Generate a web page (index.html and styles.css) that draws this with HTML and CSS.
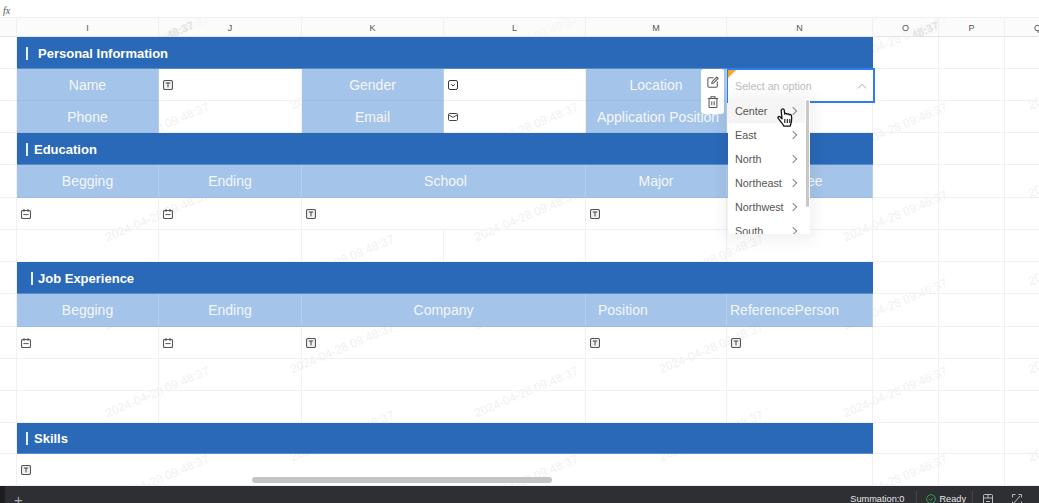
FILE: index.html
```html
<!DOCTYPE html>
<html lang="en">
<head>
<meta charset="utf-8">
<title>Resume sheet</title>
<link rel="stylesheet" href="styles.css">
</head>
<body>
<svg class="defs" width="0" height="0" aria-hidden="true">
  <symbol id="i-text" viewBox="0 0 10 10"><rect x=".5" y=".5" width="9" height="9" rx="1.6" fill="#f0f0f0" stroke="#555" stroke-width="1.100"/><path d="M2.800 3h4.400M5 3v4.400" fill="none" stroke="#444" stroke-width="1"/></symbol>
  <symbol id="i-date" viewBox="0 0 10 10"><rect x=".5" y="1.500" width="9" height="8" rx="1.400" fill="none" stroke="#555" stroke-width="1.100"/><path d="M3 0v3M7 0v3M2.400 5.600h5.200" fill="none" stroke="#555"/></symbol>
  <symbol id="i-select" viewBox="0 0 10 10"><rect x=".5" y=".5" width="9" height="9" rx="1.600" fill="none" stroke="#333"/><path d="M3.200 4.200 5 6l1.800-1.800" fill="none" stroke="#333"/></symbol>
  <symbol id="i-mail" viewBox="0 0 10 10"><rect x=".5" y="1.500" width="9" height="7" rx="1.200" fill="none" stroke="#444"/><path d="M1 3l4 2.400L9 3" fill="none" stroke="#444"/></symbol>
</svg>

<header class="formula"><i class="fx">fx</i></header>

<main class="sheet">
  <div class="marks">
    <div class="mark-col"><span>2024-04-28 09:48:37</span><span>2024-04-28 09:48:37</span><span>2024-04-28 09:48:37</span><span>2024-04-28 09:48:37</span><span>2024-04-28 09:48:37</span><span>2024-04-28 09:48:37</span></div>
    <div class="mark-col low"><span>2024-04-28 09:48:37</span><span>2024-04-28 09:48:37</span><span>2024-04-28 09:48:37</span><span>2024-04-28 09:48:37</span><span>2024-04-28 09:48:37</span><span>2024-04-28 09:48:37</span></div>
    <div class="mark-col"><span>2024-04-28 09:48:37</span><span>2024-04-28 09:48:37</span><span>2024-04-28 09:48:37</span><span>2024-04-28 09:48:37</span><span>2024-04-28 09:48:37</span><span>2024-04-28 09:48:37</span></div>
    <div class="mark-col low"><span>2024-04-28 09:48:37</span><span>2024-04-28 09:48:37</span><span>2024-04-28 09:48:37</span><span>2024-04-28 09:48:37</span><span>2024-04-28 09:48:37</span><span>2024-04-28 09:48:37</span></div>
    <div class="mark-col"><span>2024-04-28 09:46:37</span><span>2024-04-28 09:46:37</span><span>2024-04-28 09:46:37</span><span>2024-04-28 09:46:37</span><span>2024-04-28 09:46:37</span><span>2024-04-28 09:46:37</span></div>
    <div class="mark-col low"><span>2024-04-28 09:48:37</span><span>2024-04-28 09:48:37</span><span>2024-04-28 09:48:37</span><span>2024-04-28 09:48:37</span><span>2024-04-28 09:48:37</span><span>2024-04-28 09:48:37</span></div>
  </div>

  <div class="grid">
    <!-- column letters -->
    <div class="ch"></div><div class="ch">I</div><div class="ch">J<span class="hmark j">48:37</span></div><div class="ch">K</div><div class="ch">L</div><div class="ch">M</div><div class="ch">N</div><div class="ch">O<span class="hmark o">48:37</span></div><div class="ch">P</div><div class="ch">Q</div>

    <!-- Personal Information -->
    <div class="c"></div><div class="title s6"><b class="tick"></b><span class="gap-l">Personal Information</span></div><div class="c"></div><div class="c"></div><div class="c"></div>

    <div class="c"></div><div class="lbl">Name</div><div class="w"><svg class="ic"><use href="#i-text"/></svg></div><div class="lbl">Gender</div><div class="w"><svg class="ic"><use href="#i-select"/></svg></div><div class="lbl">Location</div>
    <div class="w anchor">
      <div class="tools">
        <svg width="12" height="12" viewBox="0 0 14 14" fill="none" stroke="#555" stroke-width="1.200"><path d="M7.500 2H2.200A1.200 1.200 0 0 0 1 3.200v8.600A1.200 1.200 0 0 0 2.200 13h8.600a1.200 1.200 0 0 0 1.200-1.200V6.500"/><path d="M5.600 8.600 6 6.600 11.400 1.200l1.600 1.600L7.600 8.200z"/></svg>
        <svg width="12" height="12" viewBox="0 0 14 14" fill="none" stroke="#555" stroke-width="1.200"><path d="M1 3h12M4.600 3V1h4.800v2M2.400 3v9.400a1 1 0 0 0 1 1h7.200a1 1 0 0 0 1-1V3M5.600 6v4.800M8.400 6v4.800"/></svg>
      </div>
      <div class="editor">
        <span class="flag"></span>
        <span class="ph">Select an option</span>
        <svg class="up" width="10" height="6" viewBox="0 0 10 6" fill="none" stroke="#aaa"><path d="M1 5.400 5 1.200l4 4.200"/></svg>
      </div>
      <div class="menu">
        <div class="opt on">Center<i class="gt"></i></div>
        <div class="opt">East<i class="gt"></i></div>
        <div class="opt">North<i class="gt"></i></div>
        <div class="opt">Northeast<i class="gt"></i></div>
        <div class="opt">Northwest<i class="gt"></i></div>
        <div class="opt">South<i class="gt"></i></div>
        <span class="thumb"></span>
      </div>
      <svg class="hand" width="17" height="20" viewBox="0 0 17 20"><path d="M5 1.200c.9-.7 2-.2 2.200.9l.6 4.100c.2-1 2-1 2.300.2.300-.9 1.900-.8 2.200.4.500-.6 1.900-.4 2.100.8.400 2.400.4 4.600-.3 7.200-.3 1.200-.6 2.200-.9 3.400H6.900c-.7-1.700-2-3-3.200-4.600L1.200 10.300c-.8-1.300.7-2.400 1.800-1.500l2 1.900L4.200 2.700c-.1-.6.300-1.200.8-1.500z" fill="#fff" stroke="#111" stroke-width="1.300" stroke-linejoin="round"/><path d="M7.800 11v4M10.300 11v4M12.800 11v4" stroke="#111" stroke-width="1.100"/></svg>
    </div>
    <div class="c"></div><div class="c"></div><div class="c"></div>

    <div class="c"></div><div class="lbl">Phone</div><div class="w"></div><div class="lbl">Email</div><div class="w"><svg class="ic"><use href="#i-mail"/></svg></div><div class="lbl nudge">Application Position</div><div class="w"></div><div class="c"></div><div class="c"></div><div class="c"></div>

    <!-- Education -->
    <div class="c"></div><div class="title s6"><b class="tick"></b><span>Education</span></div><div class="c"></div><div class="c"></div><div class="c"></div>

    <div class="c"></div><div class="lbl">Begging</div><div class="lbl">Ending</div><div class="lbl s2 nudge">School</div><div class="lbl">Major</div><div class="lbl">Degree</div><div class="c"></div><div class="c"></div><div class="c"></div>

    <div class="c"></div><div class="w"><svg class="ic"><use href="#i-date"/></svg></div><div class="w"><svg class="ic"><use href="#i-date"/></svg></div><div class="w s2"><svg class="ic"><use href="#i-text"/></svg></div><div class="w"><svg class="ic"><use href="#i-text"/></svg></div><div class="w"></div><div class="c"></div><div class="c"></div><div class="c"></div>

    <div class="c"></div><div class="w"></div><div class="w"></div><div class="w"></div><div class="w"></div><div class="w"></div><div class="w"></div><div class="c"></div><div class="c"></div><div class="c"></div>

    <!-- Job Experience -->
    <div class="c"></div><div class="title s6 indent"><b class="tick"></b><span>Job Experience</span></div><div class="c"></div><div class="c"></div><div class="c"></div>

    <div class="c"></div><div class="lbl">Begging</div><div class="lbl">Ending</div><div class="lbl s2">Company</div><div class="lbl start-a">Position</div><div class="lbl start-b">ReferencePerson</div><div class="c"></div><div class="c"></div><div class="c"></div>

    <div class="c"></div><div class="w"><svg class="ic"><use href="#i-date"/></svg></div><div class="w"><svg class="ic"><use href="#i-date"/></svg></div><div class="w s2"><svg class="ic"><use href="#i-text"/></svg></div><div class="w"><svg class="ic"><use href="#i-text"/></svg></div><div class="w"><svg class="ic"><use href="#i-text"/></svg></div><div class="c"></div><div class="c"></div><div class="c"></div>

    <div class="c"></div><div class="w"></div><div class="w"></div><div class="w s2"></div><div class="w"></div><div class="w"></div><div class="c"></div><div class="c"></div><div class="c"></div>
    <div class="c"></div><div class="w"></div><div class="w"></div><div class="w s2"></div><div class="w"></div><div class="w"></div><div class="c"></div><div class="c"></div><div class="c"></div>

    <!-- Skills -->
    <div class="c"></div><div class="title s6"><b class="tick"></b><span>Skills</span></div><div class="c"></div><div class="c"></div><div class="c"></div>

    <div class="c"></div><div class="w s6"><svg class="ic"><use href="#i-text"/></svg></div><div class="c"></div><div class="c"></div><div class="c"></div>
  </div>

  <div class="hscroll"></div>
</main>

<footer class="status">
  <div class="edge"></div>
  <span class="plus">+</span>
  <span class="sum">Summation:0</span>
  <i class="rule"></i>
  <svg class="ok" width="10" height="10" viewBox="0 0 11 11" fill="none" stroke="#2fa84f"><circle cx="5.500" cy="5.500" r="4.800"/><path d="M3.200 5.600l1.600 1.600 3-3"/></svg>
  <span class="ready">Ready</span>
  <i class="rule"></i>
  <svg class="ft a" width="10" height="11" viewBox="0 0 10 11" fill="none" stroke="#bbb"><rect x=".5" y=".5" width="9" height="10" rx="1"/><path d="M.5 4h9M5 .5V4M3 7.500h4"/></svg>
  <svg class="ft b" width="10" height="11" viewBox="0 0 10 11" fill="none" stroke="#bbb"><path d="M.5 3.500v-3h3M9.500 3.500v-3h-3M.5 7.500v3h3M9.500 7.500v3h-3M2 9l6-7"/></svg>
</footer>
</body>
</html>
```
FILE: styles.css
```css
* { box-sizing: border-box; }
html, body { margin: 0; height: 100%; }
body {
  width: 1039px;
  height: 503px;
  overflow: hidden;
  display: flex;
  flex-direction: column;
  background: #fff;
  font-family: "Liberation Sans", Arial, sans-serif;
  color: #555;
}
.defs { position: absolute; }

.formula {
  height: 18px;
  flex: none;
  padding-left: 3px;
  border-bottom: 1px solid #f0f0f0;
  background: #fff;
}
.fx {
  font: italic 10px/15px "Liberation Serif", serif;
  color: #555;
}

.sheet {
  position: relative;
  flex: 1;
  min-height: 0;
  overflow: hidden;
}

.marks {
  position: absolute;
  top: -22px;
  left: 65px;
  display: flex;
  z-index: 0;
}
.mark-col {
  width: 184.5px;
  flex: none;
  display: flex;
  flex-direction: column;
}
.mark-col.low { padding-top: 44px; }
.mark-col span {
  height: 88px;
  flex: none;
  display: flex;
  align-items: center;
  justify-content: center;
  white-space: nowrap;
  font-size: 12px;
  color: #f1f1f1;
  transform: rotate(-23deg);
}

.grid {
  position: relative;
  z-index: 1;
  display: grid;
  grid-template-columns: 17px 142px 143px 142px 142px 141px 146px 66px 66px 66px;
  grid-template-rows: 19px 32px 32px 32px 32px 33px 32px 32px 32px 33px 32px 32px 32px 31px 32px;
}
.ch {
  position: relative;
  overflow: hidden;
  display: flex;
  align-items: center;
  justify-content: center;
  padding-top: 1px;
  font-size: 9px;
  color: #555;
  border-right: 1px solid #f0f0f0;
  border-bottom: 1px solid #e2e6ea;
  background: rgba(248, 248, 248, .6);
}
.hmark {
  position: absolute;
  top: 6px;
  font-size: 11px;
  font-weight: 700;
  color: #e2e2e2;
  transform: rotate(-23deg);
}
.hmark.j { left: 7px; }
.hmark.o { left: 38px; }
.c, .w {
  display: flex;
  align-items: center;
  border-right: 1px solid #f1f1f1;
  border-bottom: 1px solid #f1f1f1;
}
.w { padding-left: 4px; }
.ic { width: 10px; height: 10px; flex: none; }
.s2 { grid-column: span 2; }
.s6 { grid-column: span 6; }

.title {
  display: flex;
  align-items: center;
  gap: 6px;
  padding-left: 9px;
  padding-top: 1px;
  background: #2a69b7;
  border-bottom: 1px solid #5a8cca;
  color: #fff;
  font-size: 13px;
  font-weight: 700;
}
.title.indent { padding-left: 14px; gap: 5px; }
.gap-l { margin-left: 4px; }
.tick {
  width: 2px;
  height: 13px;
  background: #e6eefa;
  flex: none;
}

.lbl {
  display: flex;
  align-items: center;
  justify-content: center;
  background: #a5c4e9;
  color: #f4f7fc;
  font-size: 14px;
  border-right: 1px solid #b4cfee;
  border-bottom: 1px solid #9cbce4;
}
.lbl.nudge { padding-left: 4px; }
.lbl.start-a { justify-content: flex-start; padding-left: 12px; }
.lbl.start-b { justify-content: flex-start; padding-left: 3px; }

.anchor { position: relative; z-index: 5; }
.tools {
  position: absolute;
  top: 0;
  left: -26px;
  width: 23px;
  height: 45px;
  display: flex;
  flex-direction: column;
  align-items: center;
  gap: 8px;
  padding-top: 7px;
  background: #fff;
  border-radius: 3px;
}
.editor {
  position: absolute;
  top: -1px;
  left: 0;
  width: 148px;
  height: 35px;
  display: flex;
  align-items: center;
  justify-content: space-between;
  padding: 0 6px;
  background: #fff;
  border: 2px solid #2f7bf5;
  border-left-width: 1px;
}
.flag {
  position: absolute;
  top: 0;
  left: 0;
  border-top: 8px solid #f5a623;
  border-right: 8px solid transparent;
}
.ph { font-size: 10.700px; margin-left: 1px; color: #bdbdbd; }
.menu {
  position: absolute;
  top: 30px;
  left: 1px;
  width: 82px;
  height: 135px;
  overflow: hidden;
  background: #fff;
  border-radius: 0 0 3px 3px;
  box-shadow: 0 2px 14px 6px rgba(0, 0, 0, .05);
}
.opt {
  height: 24px;
  flex: none;
  display: flex;
  align-items: center;
  justify-content: space-between;
  padding: 0 14px 0 7px;
  font-size: 10.800px;
  color: #555;
}
.opt.on { background: #f5f5f5; margin-right: 5px; padding-right: 9px; }
.gt {
  width: 6px;
  height: 6px;
  border-top: 1px solid #888;
  border-right: 1px solid #888;
  transform: rotate(45deg);
}
.thumb {
  position: absolute;
  top: 1px;
  right: 1px;
  width: 3px;
  height: 107px;
  background: #c8c8c8;
  border-radius: 2px;
}
.hand {
  position: absolute;
  top: 39px;
  left: 50px;
}

.hscroll {
  position: absolute;
  left: 252px;
  bottom: 3px;
  width: 300px;
  height: 6px;
  border-radius: 3px;
  background: #c4c4c4;
  z-index: 2;
}

.status {
  height: 17px;
  flex: none;
  display: flex;
  align-items: center;
  background: #2e2f33;
  color: #e8e8e8;
  font-size: 9.200px;
  overflow: hidden;
  padding-top: 9px;
}
.edge { width: 5px; height: 30px; background: #1e1e20; flex: none; }
.plus { margin-left: 9px; font-size: 15px; color: #aaa; }
.sum { margin-left: auto; margin-right: 12px; }
.rule { width: 1px; height: 17px; background: #44454a; flex: none; }
.ok { margin: 0 3px 0 9px; }
.ready { margin-right: 6px; }
.ft.a { margin: 0 19px 0 10px; }
.ft.b { margin-right: 17px; }
```
